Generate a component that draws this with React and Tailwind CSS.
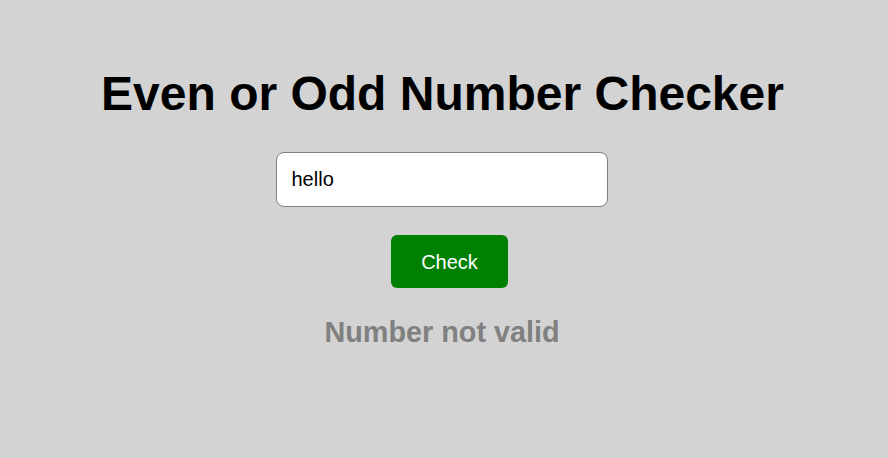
import React from "react";

const App = () => {
  const [value, setValue] = React.useState("hello");

  return (
    <div className="min-h-screen bg-[#d3d3d3] flex flex-col items-center pt-[66px] font-['Liberation_Sans',Arial,sans-serif]">
      <h1 className="mr-[3px] text-[48px] leading-[55px] font-bold text-black">
        Even or Odd Number Checker
      </h1>
      <input
        type="text"
        value={value}
        onChange={(e) => setValue(e.target.value)}
        className="mt-[31px] mr-[5px] w-[332px] h-[55px] px-[15px] text-[20px] text-black bg-white border border-[#808080] rounded-lg outline-none"
      />
      <button className="mt-[28px] ml-[11px] w-[117px] h-[53px] bg-[#008000] text-white text-[20px] rounded-md">
        Check
      </button>
      <p className="mt-[28px] mr-[4px] text-[28.8px] leading-[33px] font-bold text-[#808080]">
        Number not valid
      </p>
    </div>
  );
};

export default App;
